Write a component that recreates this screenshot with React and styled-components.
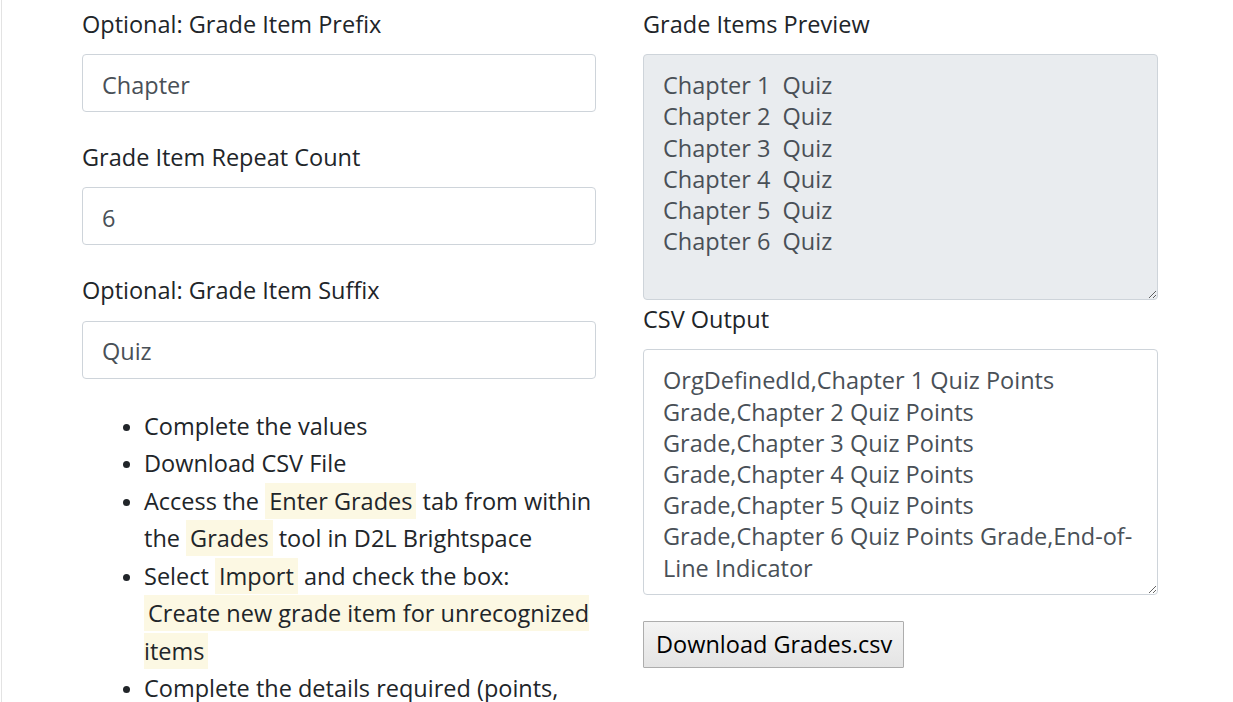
import React from "react";
import styled, { createGlobalStyle } from "styled-components";

const GlobalStyle = createGlobalStyle`
  html, body {
    margin: 0;
    padding: 0;
    background: #fff;
  }
  body {
    font-family: "Open Sans", "Noto Sans", sans-serif;
    font-size: 23.5px;
    line-height: 31.2px;
    color: #212529;
  }
  * {
    box-sizing: border-box;
  }
`;

const Page = styled.div`
  margin-left: 1px;
  border-left: 1px solid #e3e3e3;
  min-height: 702px;
  padding: 9px 0 0 80px;
  display: grid;
  grid-template-columns: 514px 515px;
  column-gap: 47px;
  align-items: start;
`;

const Column = styled.div`
  display: flex;
  flex-direction: column;
`;

const FormGroup = styled.div`
  display: flex;
  flex-direction: column;

  & + & {
    margin-top: 30px;
  }
`;

const Label = styled.label`
  display: block;
  margin-bottom: 14px;
  color: #212529;
  line-height: 31.2px;
`;

const Input = styled.input`
  display: block;
  width: 100%;
  height: 58px;
  padding: 3px 19px 0;
  font: inherit;
  line-height: 31.2px;
  color: #495057;
  background: #fff;
  border: 1px solid #ced4da;
  border-radius: 4px;
  outline: none;
`;

const TextArea = styled.textarea`
  display: block;
  width: 100%;
  height: 246px;
  padding: 15px 19px 8px;
  font: inherit;
  line-height: 31.2px;
  color: #495057;
  background: ${(p) => (p.$muted ? "#e9ecef" : "#fff")};
  border: 1px solid #ced4da;
  border-radius: 4px;
  overflow: hidden;
  resize: vertical;
  outline: none;
`;

const Steps = styled.ul`
  margin: 29px -6px 0 0;
  padding-left: 62px;
  line-height: 37.5px;

  li::marker {
    font-size: 20px;
  }
`;

const Mark = styled.mark`
  background: #fcf8e3;
  color: #212529;
  padding: 2px 4px;
`;

const OutputLabel = styled(Label)`
  margin-top: ${(p) => p.$top || 0}px;
`;

const DownloadButton = styled.button`
  align-self: flex-start;
  margin-top: 26px;
  height: 47px;
  padding: 0 11px 0 12px;
  font: inherit;
  color: #000;
  background: linear-gradient(#f3f3f3, #e4e4e4);
  border: 1px solid #adadad;
  border-radius: 1px;
  cursor: pointer;
`;

const prefix = "Chapter";
const suffix = "Quiz";
const count = 6;

const previewText = Array.from({ length: count }, (_, i) => `${prefix} ${i + 1}  ${suffix}`).join("\n");

const csvText = [
  "OrgDefinedId,Chapter 1 Quiz Points",
  "Grade,Chapter 2 Quiz Points",
  "Grade,Chapter 3 Quiz Points",
  "Grade,Chapter 4 Quiz Points",
  "Grade,Chapter 5 Quiz Points",
  "Grade,Chapter 6 Quiz Points Grade,End-of-",
  "Line Indicator",
].join("\n");

export default function App() {
  return (
    <>
      <GlobalStyle />
      <Page>
        <Column>
          <FormGroup>
            <Label>Optional: Grade Item Prefix</Label>
            <Input defaultValue={prefix} />
          </FormGroup>
          <FormGroup>
            <Label>Grade Item Repeat Count</Label>
            <Input defaultValue={count} />
          </FormGroup>
          <FormGroup>
            <Label>Optional: Grade Item Suffix</Label>
            <Input defaultValue={suffix} />
          </FormGroup>
          <Steps>
            <li>Complete the values</li>
            <li>Download CSV File</li>
            <li>
              Access the <Mark>Enter Grades</Mark> tab from within the <Mark>Grades</Mark> tool in D2L Brightspace
            </li>
            <li>
              Select <Mark>Import</Mark> and check the box:
              <br />
              <Mark>Create new grade item for unrecognized items</Mark>
            </li>
            <li>Complete the details required (points, type, category)</li>
          </Steps>
        </Column>

        <Column>
          <Label>Grade Items Preview</Label>
          <TextArea readOnly $muted value={previewText} />
          <OutputLabel $top={4}>CSV Output</OutputLabel>
          <TextArea readOnly value={csvText} />
          <DownloadButton type="button">Download Grades.csv</DownloadButton>
        </Column>
      </Page>
    </>
  );
}
